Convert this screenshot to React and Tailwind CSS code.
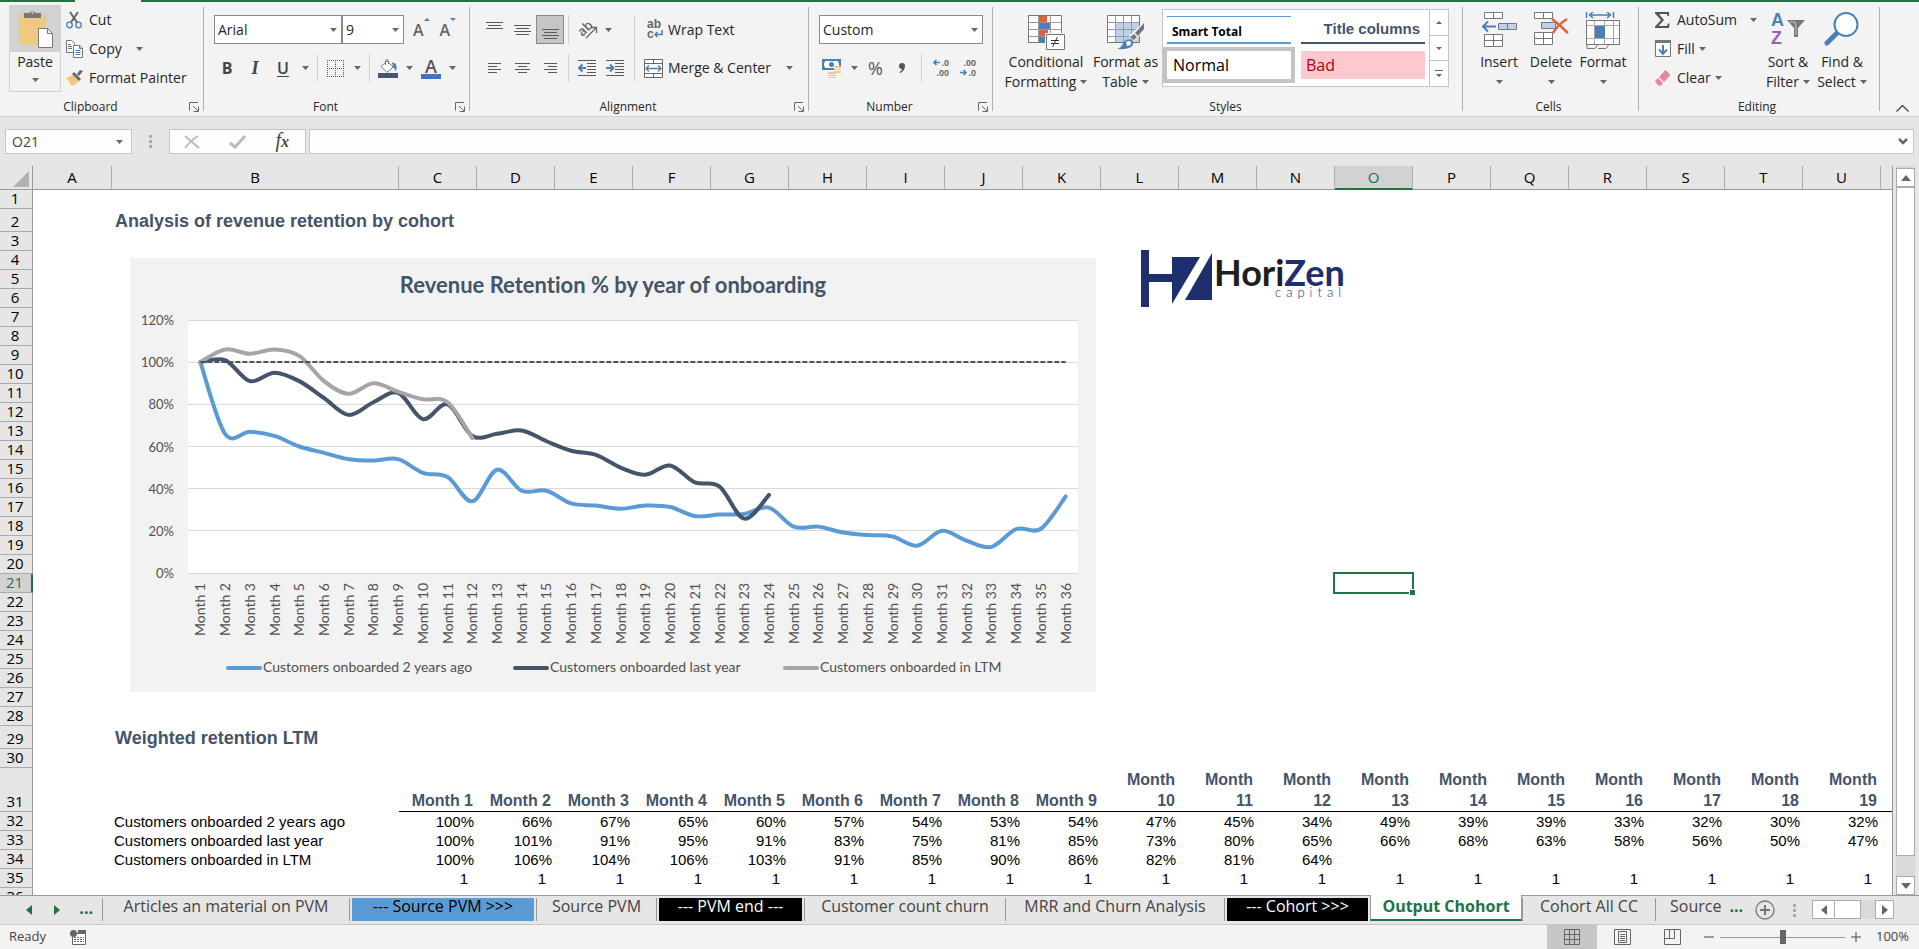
import React, { useState } from 'react';

const MONTHS = Array.from({ length: 36 }, (_, i) => `Month ${i + 1}`);

const series = [
  {
    name: 'Customers onboarded 2 years ago',
    color: '#5b9bd5',
    legendX: 96,
    values: [
      100, 66, 67, 65, 60, 57, 54, 53.4, 54, 47.5, 45.5, 34, 49, 39, 39, 33, 32, 30.5, 32,
      31.3, 27, 27.7, 28, 31, 22, 22, 19.2, 18, 17.3, 13, 20, 15.3, 12.4, 20.8, 21, 36.3,
    ],
  },
  {
    name: 'Customers onboarded last year',
    color: '#44546a',
    legendX: 383,
    values: [
      100, 101, 91, 95, 91, 83, 75, 81, 85.5, 73, 80, 65, 66, 67.6, 62.5, 58, 56, 50, 46.6,
      51, 43, 41, 25.8, 37,
    ],
  },
  {
    name: 'Customers onboarded in LTM',
    color: '#a5a5a5',
    legendX: 653,
    values: [100, 106, 104, 106, 103, 91, 85, 90, 86, 82.4, 81, 64],
  },
];

const table = [
  {
    row: 32,
    label: 'Customers onboarded 2 years ago',
    values: [100, 66, 67, 65, 60, 57, 54, 53, 54, 47, 45, 34, 49, 39, 39, 33, 32, 30, 32],
  },
  {
    row: 33,
    label: 'Customers onboarded last year',
    values: [100, 101, 91, 95, 91, 83, 75, 81, 85, 73, 80, 65, 66, 68, 63, 58, 56, 50, 47],
  },
  {
    row: 34,
    label: 'Customers onboarded in LTM',
    values: [100, 106, 104, 106, 103, 91, 85, 90, 86, 82, 81, 64],
  },
];

const COLUMNS = 'ABCDEFGHIJKLMNOPQRSTU'.split('');
const DATA_COLUMNS = COLUMNS.slice(2);

const sheets = [
  { name: 'Articles an material on PVM', width: 'w-[242px]' },
  { name: '--- Source PVM >>>', width: 'w-[182px]', color: 'bg-[#5b9bd5] text-black' },
  { name: 'Source PVM', width: 'w-[115px]' },
  { name: '--- PVM end ---', width: 'w-[143px]', color: 'bg-black text-white' },
  { name: 'Customer count churn', width: 'w-[196px]' },
  { name: 'MRR and Churn Analysis', width: 'w-[214px]' },
  { name: '--- Cohort >>>', width: 'w-[141px]', color: 'bg-black text-white' },
  { name: 'Output Chohort', width: 'w-[150px]' },
  { name: 'Cohort All CC', width: 'w-[128px]' },
];

/* ---------- ribbon building blocks ---------- */

const Caret = () => (
  <svg className="h-1 w-[7px] shrink-0" viewBox="0 0 7 4">
    <path d="M0 0h7L3.5 4z" fill="#666" />
  </svg>
);

const Divider = () => <div className="my-[5px] w-px shrink-0 bg-[#b1b1b1]" />;

const Group = ({ title, width, launcher, children }) => (
  <section className={`flex shrink-0 flex-col ${width}`}>
    <div className="h-24">{children}</div>
    <div className="flex h-[18px] items-center pr-1 text-xs">
      <span className={`flex-1 text-center ${launcher ? 'pr-2' : ''}`}>{title}</span>
      {launcher && (
        <button aria-label={`${title} settings`}>
          <svg className="h-[10px] w-[10px]" viewBox="0 0 10 10" fill="none" stroke="#666">
            <path d="M.5 8.500V.5H9M4 4l5 5M9.500 4.500v5H4.500" />
          </svg>
        </button>
      )}
    </div>
  </section>
);

const BigButton = ({ icon, lines, width, caretBelow }) => (
  <button className={`flex flex-col items-center whitespace-nowrap text-sm leading-5 ${width}`}>
    <span className="flex h-10 items-start">{icon}</span>
    {lines.map((line, i) => (
      <span key={line} className="flex items-center gap-1">
        {line}
        {!caretBelow && i === lines.length - 1 && <Caret />}
      </span>
    ))}
    {caretBelow && (
      <span className="flex h-5 items-center">
        <Caret />
      </span>
    )}
  </button>
);

const SelectBox = ({ label, options, width }) => (
  <div className={`relative ${width}`}>
    <select
      aria-label={label}
      className="h-[29px] w-full appearance-none border border-[#8a8a8a] bg-white pl-[3px] text-sm text-[#262626]"
    >
      {options.map((o) => (
        <option key={o}>{o}</option>
      ))}
    </select>
    <span className="pointer-events-none absolute right-[5px] top-0 flex h-full items-center">
      <Caret />
    </span>
  </div>
);

const Lines = ({ rows }) => (
  <svg className="h-[18px] w-[17px]" viewBox="0 0 17 18" fill="none" stroke="#595959">
    {rows.map(([x, y, len]) => (
      <path key={y} d={`M${x} ${y}.5h${len}`} />
    ))}
  </svg>
);

const Indent = ({ flip }) => (
  <svg className="h-[18px] w-[18px]" viewBox="0 0 18 18" fill="none">
    <path d="M0 1.500h18M9 4.500h9M9 7.500h9M9 10.500h9M9 13.500h9M0 16.500h18" stroke="#595959" />
    <path
      d={flip ? 'M0 9h7M4 5.500 7.500 9 4 12.500' : 'M8 9H1M4.500 5.500 1 9l3.500 3.500'}
      stroke="#4a7fb8"
      strokeWidth="2"
    />
  </svg>
);

const Decimals = ({ decrease }) => (
  <svg
    className="h-5 w-4 overflow-visible font-['Liberation_Sans',sans-serif]"
    viewBox="0 0 16 20"
    fontSize="9"
    fontWeight="700"
    fill="#666"
  >
    <text x="16" y="8" textAnchor="end">
      {decrease ? '.00' : '.0'}
    </text>
    <text x="16" y="18" textAnchor="end">
      {decrease ? '.0' : '.00'}
    </text>
    <path
      d={decrease ? 'M0 14.500h6M3.500 12 6 14.500 3.500 17' : 'M7 4.500H1M3.500 2 1 4.500 3.500 7'}
      fill="none"
      stroke="#4a7fb8"
      strokeWidth="1.700"
    />
  </svg>
);

/* ---------- ribbon groups ---------- */

const Clipboard = () => (
  <Group title="Clipboard" width="w-[203px]" launcher>
    <div className="flex pl-[9px] pt-[3px]">
      <button className="flex h-[87px] w-[52px] flex-col items-center border border-[#d2d2d2] text-sm leading-5">
        <span className="flex h-[46px] w-full items-end justify-center bg-[#d2d2d2] pb-1">
          <svg className="h-[38px] w-9" viewBox="0 0 36 38">
            <rect x="2" y="4" width="27" height="31" rx="1" fill="#efc97f" />
            <path d="M7 8V3h5a4 3 0 0 1 7 0h5v5z" fill="#777" />
            <circle cx="15.500" cy="3" r="1" fill="#d2d2d2" />
            <path d="M21.500 18.500h9l5 5v14h-14z" fill="#fff" stroke="#777" />
            <path d="M30.500 18.500v5h5" fill="none" stroke="#777" />
          </svg>
        </span>
        <span>Paste</span>
        <span className="flex h-4 items-center">
          <Caret />
        </span>
      </button>
      <div className="flex flex-col pl-[5px] text-sm leading-[29px]">
        <button className="flex items-center gap-[7px]">
          <svg className="h-[18px] w-4" viewBox="0 0 16 18" fill="none">
            <path d="M4 1l7.500 11M12 1 4.500 12" stroke="#666" strokeWidth="2" />
            <circle cx="3.500" cy="14" r="2.800" stroke="#4a7fb8" strokeWidth="1.300" />
            <circle cx="12.500" cy="14" r="2.800" stroke="#4a7fb8" strokeWidth="1.300" />
          </svg>
          Cut
        </button>
        <button className="flex items-center gap-[6px]">
          <svg className="h-[18px] w-[17px]" viewBox="0 0 17 18" fill="#fff" stroke="#777">
            <path d="M.5.5h5l3 3v9h-8z" />
            <path d="M2 4.500h3M2 6.500h4M2 8.500h4" stroke="#4a7fb8" />
            <path d="M7.500 5.500h6l3 3v9h-9z" />
            <path d="M13.500 5.500v3h3" fill="none" />
            <path d="M9.500 10.500h5M9.500 12.500h5M9.500 14.500h5" stroke="#4a7fb8" />
          </svg>
          Copy
          <span className="pl-2">
            <Caret />
          </span>
        </button>
        <button className="flex items-center gap-[6px] whitespace-nowrap">
          <svg className="h-4 w-[17px]" viewBox="0 0 17 16">
            <path d="M0 8l7-3 6 6-6 5c-2-1-3-2-4-4l-1-2z" fill="#efc97f" />
            <path d="M6 4l2-2 7 7-2 2z" fill="#666" />
            <path d="M11 4l3-4 3 1-4 5z" fill="#666" />
          </svg>
          Format Painter
        </button>
      </div>
    </div>
  </Group>
);

const FontGroup = () => (
  <Group title="Font" width="w-[265px]" launcher>
    <div className="flex flex-col gap-[10px] pl-[10px] pt-[13px]">
      <div className="flex items-center">
        <SelectBox label="Font" options={['Arial', 'Calibri']} width="w-[128px]" />
        <SelectBox label="Font size" options={['9', '10', '11']} width="w-[62px]" />
        <button aria-label="Increase font size" className="ml-[9px] flex items-start text-base font-semibold text-[#666]">
          A
          <svg className="h-[3px] w-[6px]" viewBox="0 0 6 3">
            <path d="M0 3h6L3 0z" fill="#4a7fb8" />
          </svg>
        </button>
        <button aria-label="Decrease font size" className="ml-[10px] flex items-start text-base font-semibold text-[#666]">
          A
          <svg className="h-[3px] w-[6px]" viewBox="0 0 6 3">
            <path d="M0 0h6L3 3z" fill="#4a7fb8" />
          </svg>
        </button>
      </div>
      <div className="flex h-7 items-center text-base text-[#444]">
        <button className="w-[26px] font-bold">B</button>
        <button className="w-[30px] font-['Liberation_Serif',serif] text-lg font-bold italic">I</button>
        <button className="w-[26px] font-semibold underline underline-offset-2">U</button>
        <button aria-label="Underline style" className="flex w-[18px] justify-center">
          <Caret />
        </button>
        <div className="ml-[3px] h-7 w-px bg-[#d2d2d2]" />
        <button aria-label="Borders" className="flex items-center gap-[10px] pl-[9px]">
          <svg className="h-[17px] w-[17px]" viewBox="0 0 17 17" fill="none" stroke="#555" strokeDasharray="1 1">
            <path d="M0 .5h17M0 8.500h17M0 16.500h17M.5 0v17M8.500 0v17M16.500 0v17" />
          </svg>
          <Caret />
        </button>
        <div className="ml-2 h-7 w-px bg-[#d2d2d2]" />
        <button aria-label="Fill color" className="flex items-center gap-2 pl-2">
          <svg className="h-5 w-5" viewBox="0 0 20 20">
            <path d="M3 8.500 9 3l6 6-6 5.500z" fill="#fff" stroke="#777" />
            <path d="M7.500 7V2.500a1.700 1.700 0 0 1 3 0V6" fill="none" stroke="#777" />
            <path d="M14 4.500c4 0 5.500 3 4 9-1-1.500-1.500-3.500-3-4.500z" fill="#4a7fb8" />
            <path d="M0 15h20v5H0z" fill="#44546a" />
          </svg>
          <Caret />
        </button>
        <button aria-label="Font color" className="flex items-center gap-2 pl-2">
          <span className="flex w-5 flex-col items-center border-b-[5px] border-[#4472c4] text-lg leading-4 font-semibold text-[#555]">
            A
          </span>
          <Caret />
        </button>
      </div>
    </div>
  </Group>
);

const Alignment = () => (
  <Group title="Alignment" width="w-[338px]" launcher>
    <div className="flex pl-[10px] pt-[13px]">
      <div className="flex flex-col gap-[10px]">
        <div className="flex h-[29px] items-center">
          <button aria-label="Top align" className="flex w-7 justify-center">
            <Lines rows={[[0, 1, 17], [2, 4, 13], [0, 7, 17]]} />
          </button>
          <button aria-label="Middle align" className="flex w-7 justify-center">
            <Lines rows={[[0, 4, 17], [2, 7, 13], [0, 10, 17], [2, 13, 13]]} />
          </button>
          <button aria-label="Bottom align" className="flex h-[29px] w-7 items-center justify-center border border-[#8a8a8a] bg-[#c5c5c5]">
            <Lines rows={[[0, 8, 17], [2, 11, 13], [0, 14, 17], [2, 17, 13]]} />
          </button>
        </div>
        <div className="flex h-7 items-center">
          <button aria-label="Align left" className="flex w-7 justify-center">
            <Lines rows={[[2, 4, 13], [2, 7, 9], [2, 10, 13], [2, 13, 9]]} />
          </button>
          <button aria-label="Center" className="flex w-7 justify-center">
            <Lines rows={[[1, 4, 15], [4, 7, 9], [1, 10, 15], [4, 13, 9]]} />
          </button>
          <button aria-label="Align right" className="flex w-7 justify-center">
            <Lines rows={[[2, 4, 13], [6, 7, 9], [2, 10, 13], [6, 13, 9]]} />
          </button>
        </div>
      </div>
      <div className="flex flex-col gap-[10px] pl-1">
        <div className="flex h-[29px] items-center border-l border-[#d2d2d2] pl-[9px]">
          <button aria-label="Orientation" className="flex items-center gap-[7px]">
            <svg className="h-5 w-5 overflow-visible" viewBox="0 0 20 20">
              <text x="0" y="14" fontSize="13" fontWeight="600" fill="#666" transform="rotate(-45 6 10)">
                ab
              </text>
              <path d="M8 18 18 8M13 7.500h5.500V13" fill="none" stroke="#666" strokeWidth="1.300" />
            </svg>
            <Caret />
          </button>
        </div>
        <div className="flex h-7 items-center gap-[10px] border-l border-[#d2d2d2] pl-[9px]">
          <button aria-label="Decrease indent">
            <Indent />
          </button>
          <button aria-label="Increase indent">
            <Indent flip />
          </button>
        </div>
      </div>
      <div className="ml-[10px] flex flex-col gap-[10px] border-l border-[#d2d2d2] pl-[9px] text-sm">
        <button className="flex h-[29px] items-center gap-[5px] pl-[3px]">
          <svg
            className="h-5 w-4 overflow-visible font-['Liberation_Sans',sans-serif]"
            viewBox="0 0 16 20"
            fontSize="12"
            fontWeight="700"
            fill="#666"
          >
            <text x="0" y="8">ab</text>
            <text x="0" y="18">c</text>
            <path d="M15 10v4.500H8M10.500 12 8 14.500l2.500 2.500" fill="none" stroke="#4a7fb8" strokeWidth="1.500" />
          </svg>
          Wrap Text
        </button>
        <button className="flex h-7 items-center gap-[5px] whitespace-nowrap">
          <svg className="h-[19px] w-[19px]" viewBox="0 0 19 19" fill="#fff" stroke="#666">
            <path d="M.5.5h18v18H.5zM.5 4.500h18M.5 14.500h18M9.500.5v4M9.500 14.500v4" />
            <path d="M2 9.500h15M5 6.500l-3 3 3 3M14 6.500l3 3-3 3" fill="none" stroke="#4a7fb8" strokeWidth="1.400" />
          </svg>
          Merge &amp; Center
          <span className="pl-[10px]">
            <Caret />
          </span>
        </button>
      </div>
    </div>
  </Group>
);

const NumberGroup = () => (
  <Group title="Number" width="w-[183px]" launcher>
    <div className="flex flex-col gap-[10px] pl-[10px] pt-[13px]">
      <SelectBox label="Number format" options={['Custom', 'General']} width="w-[164px]" />
      <div className="flex h-7 items-center">
        <button aria-label="Accounting format" className="flex items-center gap-[9px] pl-[3px]">
          <svg className="h-5 w-5" viewBox="0 0 20 20">
            <path d="M0 1h19v11H0z" fill="#4a7fb8" />
            <path d="M3 3h13v1.500h1v4h-1V10H3V8.500H2v-4h1z" fill="#fff" />
            <circle cx="9.500" cy="6.500" r="2.500" fill="#4a7fb8" />
            <path d="M12 8h7v7h-7zM6 14h8v6H6z" fill="#efc97f" />
            <path d="M12 10.500h7M12 12.500h7M6 16.500h8M6 18.500h8" stroke="#fff" strokeWidth=".8" />
          </svg>
          <Caret />
        </button>
        <button className="ml-[10px] text-lg text-[#555]">%</button>
        <button aria-label="Comma style" className="ml-4">
          <svg className="h-[10px] w-[6px]" viewBox="0 0 6 10">
            <path d="M3 0a3 3 0 0 1 3 3c0 3-2 6-5 7l-.5-1C2.500 8 3 7 3 6a3 3 0 0 1 0-6z" fill="#555" />
          </svg>
        </button>
        <div className="ml-4 h-7 w-px bg-[#d2d2d2]" />
        <button aria-label="Increase decimal" className="ml-[11px]">
          <Decimals />
        </button>
        <button aria-label="Decrease decimal" className="ml-[11px]">
          <Decimals decrease />
        </button>
      </div>
    </div>
  </Group>
);

const Styles = () => (
  <Group title="Styles" width="w-[469px]">
    <div className="flex pl-[10px] pt-[7px]">
      <div className="flex pt-[3px]">
        <BigButton
          width="w-[86px]"
          lines={['Conditional', 'Formatting']}
          icon={
            <svg className="mt-[3px] h-[35px] w-[37px]" viewBox="0 0 37 35">
              <path d="M.5.5h33v27H.5z" fill="#fff" />
              <path d="M11 1h8v6h-8zM11 15h9v6h-9z" fill="#e0623d" />
              <path d="M11 8h11v6H11zM11 22h6v5h-6z" fill="#4a7fb8" />
              <path d="M.5 7.500h33M.5 14.500h33M.5 21.500h33M10.500.5v27M22.500.5v27" stroke="#999" />
              <path d="M.5.5h33v27H.5z" fill="none" stroke="#777" />
              <path d="M17 18h20v17H17z" fill="#f3f3f3" />
              <path d="M18.500 19.500h18v15h-18z" fill="#fff" stroke="#777" />
              <path d="M23 25.500h8M23 28.500h8M29.500 22l-5 10" stroke="#333" fill="none" />
            </svg>
          }
        />
        <BigButton
          width="w-[73px]"
          lines={['Format as', 'Table']}
          icon={
            <svg className="mt-[3px] h-[35px] w-[37px]" viewBox="0 0 37 35">
              <path d="M.5.5h32v27H.5z" fill="#fff" />
              <path d="M8 7h25v21H8z" fill="#bdd1e8" />
              <path d="M.5 7.500h32M.5 14.500h32M.5 21.500h32M8.500.5v27M16.500.5v27M24.500.5v27" stroke="#999" />
              <path d="M.5.5h32v27H.5z" fill="none" stroke="#777" />
              <path d="M38 6v9L28 26l-6-5z" fill="#f3f3f3" />
              <path d="M37 8v6l-6 7-3-3zM27 19l3 3-3 3-4-3z" fill="#777" />
              <path d="M10 34c4-1 5-4 7-7 3-4 8-3 9 0 1 4-3 8-16 7z" fill="#4a7fb8" />
              <path d="M19 27c2-2 5-1 5 1s-2 3-4 3z" fill="#fff" />
            </svg>
          }
        />
      </div>
      <div className="flex h-[78px] w-[287px] border border-[#c6c6c6] bg-white">
        <div className="grid flex-1 grid-cols-2 gap-x-[2px] text-base leading-5">
          <button className="mx-1 mt-[6px] h-7 border-t border-b-2 border-[#5b9bd5] pl-[5px] pt-1 text-left text-xs leading-5 font-bold text-black">
            Smart Total
          </button>
          <button className="mx-1 mt-[6px] h-7 border-b-2 border-[#44546a] pr-[5px] text-right font-['Liberation_Sans',sans-serif] text-[15px] font-bold text-[#44546a]">
            Title columns
          </button>
          <button className="h-9 border-4 border-[#c3c3c3] bg-white pl-[6px] text-left text-black">
            Normal
          </button>
          <button className="mx-1 mt-1 h-7 bg-[#ffc7ce] pl-[5px] text-left text-[#b00010]">Bad</button>
        </div>
        <div className="flex w-[19px] flex-col border-l border-[#c6c6c6]">
          <button aria-label="Previous styles" className="flex flex-1 items-center justify-center border-b border-[#c6c6c6]">
            <svg className="h-[3px] w-[6px]" viewBox="0 0 6 3">
              <path d="M0 3h6L3 0z" fill="#666" />
            </svg>
          </button>
          <button aria-label="Next styles" className="flex flex-1 items-center justify-center border-b border-[#c6c6c6]">
            <svg className="h-[3px] w-[6px]" viewBox="0 0 6 3">
              <path d="M0 0h6L3 3z" fill="#666" />
            </svg>
          </button>
          <button aria-label="More styles" className="flex flex-1 items-center justify-center">
            <svg className="h-[7px] w-2" viewBox="0 0 8 7">
              <path d="M0 0h8v1H0zM1 4h6L4 7z" fill="#666" />
            </svg>
          </button>
        </div>
      </div>
    </div>
  </Group>
);

const Cells = () => (
  <Group title="Cells" width="w-[175px]">
    <div className="flex pl-[9px] pt-[10px]">
      <BigButton
        width="w-[54px]"
        caretBelow
        lines={['Insert']}
        icon={
          <svg className="h-9 w-9" viewBox="0 0 36 36" fill="#fff" stroke="#777">
            <path d="M3.500.5h18v6h-18zM12.500.5v6M3.500 22.500h18v12h-18zM12.500 22.500v12M3.500 28.500h18" />
            <path d="M17.500 11.500h18v6h-18zM26.500 11.500v6" fill="#bdd1e8" />
            <path d="M15 14.500H2M7 9.500l-5 5 5 5" fill="none" stroke="#4a7fb8" strokeWidth="2" />
          </svg>
        }
      />
      <BigButton
        width="w-[50px]"
        caretBelow
        lines={['Delete']}
        icon={
          <svg className="h-9 w-9" viewBox="0 0 36 36" fill="#fff" stroke="#777">
            <path d="M1.500.5h18v6h-18zM10.500.5v6M1.500 20.500h18v12h-18zM10.500 20.500v12M1.500 26.500h18" />
            <path d="M8.500 10.500h14v6h-14z" fill="#bdd1e8" />
            <path d="M19 7c4 3 11 9 16 14M34 7c-5 3-11 9-14 14" fill="none" stroke="#e0623d" strokeWidth="2.500" />
          </svg>
        }
      />
      <BigButton
        width="w-[54px]"
        caretBelow
        lines={['Format']}
        icon={
          <svg className="h-[38px] w-9" viewBox="0 0 36 38" fill="none" stroke="#777">
            <path d="M1.500 8.500h33v24h-33z" fill="#fff" />
            <path d="M1.500 13.500h33M1.500 26.500h33M9.500 8.500v24M19.500 8.500v24M28.500 8.500v24" stroke="#aaa" />
            <path d="M1.500 8.500h33v24h-33zM2 32.500v4h8l3-4M13 36.500h8l3-4" />
            <path d="M10 14h10v12H10z" fill="#4a7fb8" stroke="none" />
            <path d="M1.500 0v6M28.500 0v6M4 3h22M8 0 4.500 3 8 6M22 0l3.500 3L22 6" stroke="#4a7fb8" strokeWidth="1.500" />
          </svg>
        }
      />
    </div>
  </Group>
);

const Editing = () => (
  <Group title="Editing" width="w-[240px]">
    <div className="flex">
      <div className="flex w-[124px] flex-col pl-4 pt-[3px] text-sm leading-[29px]">
        <button className="flex items-center gap-[7px]">
          <svg className="h-4 w-[15px]" viewBox="0 0 15 16">
            <path d="M0 0h14v4h-1.500l-.5-2H4l5 6-5.500 6H12l1-2.500h1.500L14 16H0v-1.500L6 8 0 1.500z" fill="#555" />
          </svg>
          AutoSum
          <span className="pl-[6px]">
            <Caret />
          </span>
        </button>
        <button className="flex items-center gap-1">
          <svg className="mr-[2px] h-[17px] w-4" viewBox="0 0 16 17">
            <path d="M.5.5h15v16H.5z" fill="#fff" stroke="#777" />
            <path d="M0 0h16v3H0z" fill="#777" />
            <path d="M8 5v9M4 9.500l4 4.500 4-4.500" fill="none" stroke="#4a7fb8" strokeWidth="2" />
          </svg>
          Fill
          <Caret />
        </button>
        <button className="flex items-center gap-1">
          <svg className="mr-[2px] h-4 w-4" viewBox="0 0 16 16">
            <path d="M10.500 0l5 5-6.500 7-5-5z" fill="#e8879a" />
            <path d="M3 8l5 5-2.500 3C3 16 1 13.500 0 11z" fill="#e8879a" />
          </svg>
          Clear
          <Caret />
        </button>
      </div>
      <div className="flex pt-[10px]">
        <BigButton
          width="w-[50px]"
          lines={['Sort &', 'Filter']}
          icon={
            <svg
              className="h-9 w-9 overflow-visible font-['Liberation_Sans',sans-serif]"
              viewBox="0 0 36 36"
              fontSize="18"
              fontWeight="700"
            >
              <text x="1" y="14" fill="#4a7fb8">A</text>
              <text x="1" y="32" fill="#9c5fb8">Z</text>
              <path d="M17 8h18l-7 8v9h-4v-9z" fill="#777" />
              <path d="M20 10h5l1 5v8" fill="none" stroke="#ccc" />
            </svg>
          }
        />
        <BigButton
          width="w-[58px]"
          lines={['Find &', 'Select']}
          icon={
            <svg className="h-9 w-9" viewBox="0 0 36 36" fill="none" stroke="#4a7fb8">
              <path d="M12.500 21.500 3 31" strokeWidth="5" strokeLinecap="round" />
              <circle cx="22" cy="12.500" r="11.500" fill="#fff" strokeWidth="2" />
            </svg>
          }
        />
      </div>
    </div>
  </Group>
);

const Ribbon = () => (
  <header className="shrink-0 bg-[#f3f3f3]">
    <div className="flex h-[2px] bg-[#217346] pl-[75px]">
      <div className="w-[66px] bg-[#f3f3f3]" />
    </div>
    <div className="flex h-[115px] overflow-hidden border-b border-[#d2d2d2]">
      <Clipboard />
      <Divider />
      <FontGroup />
      <Divider />
      <Alignment />
      <Divider />
      <NumberGroup />
      <Divider />
      <Styles />
      <Divider />
      <Cells />
      <Divider />
      <Editing />
      <Divider />
      <div className="flex flex-1 items-end justify-end pb-1 pr-[10px]">
        <button aria-label="Collapse ribbon">
          <svg className="h-[7px] w-[13px]" viewBox="0 0 13 7" fill="none" stroke="#444" strokeWidth="1.300">
            <path d="M.5 6.500l6-6 6 6" />
          </svg>
        </button>
      </div>
    </div>
  </header>
);

const FormulaBar = () => (
  <div className="flex shrink-0 px-[5px] pb-3 pt-3">
    <div className="relative w-[127px]">
      <input
        aria-label="Name box"
        className="h-[25px] w-full border border-[#c6c6c6] bg-[#fdfdfd] pl-[6px] text-sm text-[#444]"
        defaultValue="O21"
      />
      <span className="pointer-events-none absolute right-[9px] top-0 flex h-full items-center">
        <Caret />
      </span>
    </div>
    <svg className="ml-[17px] mt-[6px] h-[13px] w-[3px]" viewBox="0 0 3 13" fill="#aaa">
      <path d="M0 0h3v3H0zM0 5h3v3H0zM0 10h3v3H0z" />
    </svg>
    <div className="ml-[17px] flex h-[25px] w-[137px] items-center justify-between border border-[#c6c6c6] bg-[#fdfdfd] px-[14px]">
      <button aria-label="Cancel">
        <svg className="h-[14px] w-4" viewBox="0 0 16 14" fill="none" stroke="#bbb" strokeWidth="2">
          <path d="M1 1c5 4 9 8 14 12M14 1C9 4 5 8 1 13" />
        </svg>
      </button>
      <button aria-label="Enter">
        <svg className="h-[14px] w-[17px]" viewBox="0 0 17 14" fill="none" stroke="#bbb" strokeWidth="3">
          <path d="M1 8l5 4L16 1" />
        </svg>
      </button>
      <button aria-label="Insert function" className="pr-[2px] font-['Liberation_Serif',serif] text-xl leading-5 italic text-[#444]">
        f<span className="text-base font-bold">x</span>
      </button>
    </div>
    <div className="ml-[3px] flex h-[25px] flex-1 items-center border border-[#c6c6c6] bg-[#fdfdfd] pr-[5px]">
      <input aria-label="Formula bar" className="h-full min-w-0 flex-1 px-2 text-sm" />
      <button aria-label="Expand formula bar">
        <svg className="h-[7px] w-[10px]" viewBox="0 0 10 7" fill="none" stroke="#666" strokeWidth="2.500">
          <path d="M1 1l4 4 4-4" />
        </svg>
      </button>
    </div>
  </div>
);

/* ---------- chart ---------- */

const PLOT = { left: 58, right: 948, top: 62, bottom: 315 };
const STEP = (PLOT.right - PLOT.left) / MONTHS.length;
const xAt = (i) => PLOT.left + STEP * (i + 0.5);
const yAt = (v) => PLOT.bottom - ((PLOT.bottom - PLOT.top) * v) / 120;

// Catmull-Rom spline through the points, written as cubic beziers
const smooth = (values) => {
  const p = values.map((v, i) => [xAt(i), yAt(v)]);
  let d = `M${p[0][0]} ${p[0][1]}`;
  for (let i = 0; i < p.length - 1; i++) {
    const a = p[i - 1] || p[i];
    const b = p[i];
    const c = p[i + 1];
    const e = p[i + 2] || c;
    d += ` C${b[0] + (c[0] - a[0]) / 6} ${b[1] + (c[1] - a[1]) / 6} ${c[0] - (e[0] - b[0]) / 6} ${c[1] - (e[1] - b[1]) / 6} ${c[0]} ${c[1]}`;
  }
  return d;
};

const RetentionChart = () => (
  <svg
    className="absolute left-[130px] top-[92px] h-[434px] w-[966px] bg-[#f2f2f2] font-[Lato,sans-serif] [font-variant-ligatures:none]"
    viewBox="0 0 966 434"
    fill="#505050"
    fontSize="14"
  >
    <text x="483" y="35" textAnchor="middle" fontSize="22" fontWeight="700" fill="#44546a">
      Revenue Retention % by year of onboarding
    </text>
    <rect x={PLOT.left} y={PLOT.top} width={PLOT.right - PLOT.left} height={PLOT.bottom - PLOT.top} fill="#fff" />
    {[0, 20, 40, 60, 80, 100, 120].map((v) => (
      <g key={v}>
        <path d={`M${PLOT.left} ${Math.floor(yAt(v)) + 0.5}H${PLOT.right}`} stroke="#d9d9d9" />
        <text x="44" y={yAt(v) + 5} textAnchor="end" fontSize="13">
          {v}%
        </text>
      </g>
    ))}
    {series.map((s) => (
      <path key={s.name} d={smooth(s.values)} fill="none" stroke={s.color} strokeWidth="4" strokeLinejoin="round" strokeLinecap="round" />
    ))}
    <path d={`M${xAt(0)} ${Math.floor(yAt(100))}H${xAt(35)}`} stroke="#44546a" strokeWidth="2" strokeDasharray="5 2" />
    {MONTHS.map((m, i) => (
      <text key={m} textAnchor="end" transform={`translate(${xAt(i) + 5} 325) rotate(-90)`}>
        {m}
      </text>
    ))}
    {series.map((s) => (
      <g key={s.name}>
        <path d={`M${s.legendX + 2} 410h32`} stroke={s.color} strokeWidth="4" strokeLinecap="round" />
        <text x={s.legendX + 37} y="414">
          {s.name}
        </text>
      </g>
    ))}
  </svg>
);

const Logo = () => (
  <svg
    className="absolute left-[1140px] top-[82px] h-[62px] w-[212px] font-[Lato,sans-serif]"
    viewBox="0 0 212 62"
    fill="#1e2f6d"
  >
    <path d="M1 2h8v24h23v8H9v25H1z" />
    <path d="M32 9h28L32 56zM72 5v47H45z" />
    <text x="74" y="38" fontSize="36" fontWeight="700" fill="#1e1e1e">
      Hori<tspan fill="#1e2f6d">Zen</tspan>
    </text>
    <text className="tracking-[5px]" x="135" y="49" fontSize="13" fontWeight="300">
      capital
    </text>
  </svg>
);

/* ---------- sheet ---------- */

const rowHeight = (n) => {
  if (n === 2 || n === 29) return 'h-[23px]';
  if (n === 31) return 'h-11';
  return 'h-[19px]';
};

const RowHeader = ({ n }) => (
  <th
    scope="row"
    className={`border-b border-b-[#ababab] p-0 pr-[2px] pb-px align-bottom font-['Open_Sans',sans-serif] text-[15px] leading-[17px] font-normal ${
      n === 21
        ? 'border-r-2 border-r-[#217346] bg-[#d2d2d2] text-[#217346]'
        : 'border-r border-r-[#999] bg-[#e6e6e6] text-black'
    }`}
  >
    {n}
  </th>
);

const SheetRow = ({ n }) => {
  const data = table.find((t) => t.row === n);
  const titles = { 2: 'Analysis of revenue retention by cohort', 29: 'Weighted retention LTM' };

  if (titles[n]) {
    return (
      <tr className={rowHeight(n)}>
        <RowHeader n={n} />
        <td />
        <td colSpan={21} className="p-0 pl-[3px] text-lg leading-[22px] font-bold text-[#44546a]">
          {titles[n]}
        </td>
      </tr>
    );
  }

  return (
    <tr className={rowHeight(n)}>
      <RowHeader n={n} />
      <td className="p-0" />
      <td className="p-0 pl-[2px]">{data && data.label}</td>
      {DATA_COLUMNS.map((c, i) => {
        if (n === 31) {
          return (
            <td key={c} className="border-b border-black p-0 pl-3 pr-1 text-right align-bottom text-base leading-[21px] font-bold text-[#44546a]">
              {MONTHS[i]}
            </td>
          );
        }
        if (n === 21 && c === 'O') {
          return (
            <td key={c} className="relative p-0">
              <div className="absolute -left-[2px] -top-[2px] -right-px -bottom-px border-2 border-[#217346]" />
              <div className="absolute -right-[3px] -bottom-[3px] h-[7px] w-[7px] border border-white bg-[#217346]" />
            </td>
          );
        }
        return (
          <td key={c} className={`p-0 text-right ${n === 35 ? 'pr-[9px]' : 'pr-[3px]'}`}>
            {data && data.values[i] !== undefined && `${data.values[i]}%`}
            {n === 35 && 1}
          </td>
        );
      })}
      <td className={n === 31 ? 'border-b border-black p-0' : 'p-0'} />
    </tr>
  );
};

const Sheet = () => (
  <div className="relative min-w-0 flex-1 overflow-hidden border-r border-[#999]">
    <table className="w-full table-fixed border-separate border-spacing-0 bg-white font-['Liberation_Sans',sans-serif] text-[15px] leading-[18px] text-black">
      <colgroup>
        <col className="w-[33px]" />
        <col className="w-[79px]" />
        <col className="w-[287px]" />
        {DATA_COLUMNS.map((c) => (
          <col key={c} className="w-[78px]" />
        ))}
        <col />
      </colgroup>
      <thead className="font-['Open_Sans',sans-serif]">
        <tr className="h-6">
          <th className="border-b border-r border-[#999] bg-[#e6e6e6] p-0 pb-[2px] pr-[3px] align-bottom">
            <svg className="ml-auto h-4 w-4" viewBox="0 0 16 16">
              <path d="M16 0v16H0z" fill="#b1b1b1" />
            </svg>
          </th>
          {COLUMNS.map((c) => (
            <th
              key={c}
              scope="col"
              className={`border-r border-r-[#ababab] p-0 text-[15px] leading-[21px] font-normal ${
                c === 'O'
                  ? 'border-b-2 border-b-[#217346] bg-[#d2d2d2] text-[#217346]'
                  : 'border-b border-b-[#999] bg-[#e6e6e6]'
              }`}
            >
              {c}
            </th>
          ))}
          <th className="border-b border-[#999] bg-[#e6e6e6] p-0" />
        </tr>
      </thead>
      <tbody>
        {Array.from({ length: 36 }, (_, i) => (
          <SheetRow key={i} n={i + 1} />
        ))}
      </tbody>
    </table>
    <RetentionChart />
    <Logo />
  </div>
);

const arrows = {
  up: 'M0 8h10L5 2z',
  down: 'M0 2h10L5 8z',
  left: 'M8 0v10L2 5z',
  right: 'M2 0v10l6-5z',
};

const Arrow = ({ dir, color = '#666' }) => (
  <svg className="h-[10px] w-[10px]" viewBox="0 0 10 10">
    <path d={arrows[dir]} fill={color} />
  </svg>
);

const VerticalScroll = () => (
  <div className="ml-[3px] mr-1 flex w-[19px] shrink-0 flex-col bg-[#d9d9d9] pt-[2px]">
    <button aria-label="Scroll up" className="flex h-[19px] items-center justify-center border border-[#ababab] bg-white">
      <Arrow dir="up" />
    </button>
    <div className="mb-5 flex-1 border border-[#ababab] bg-white" />
    <button aria-label="Scroll down" className="flex h-[19px] items-center justify-center border border-[#ababab] bg-white">
      <Arrow dir="down" />
    </button>
  </div>
);

const SheetTabs = () => {
  const [active, setActive] = useState('Output Chohort');

  return (
    <nav className="flex h-[30px] shrink-0 border-b border-[#c6c6c6] text-base text-[#444]">
      <div className="flex w-[102px] items-center justify-between border-t border-[#999] pl-[24px] pr-[9px]">
        <button aria-label="Previous sheet">
          <Arrow dir="left" color="#217346" />
        </button>
        <button aria-label="Next sheet">
          <Arrow dir="right" color="#217346" />
        </button>
        <button className="pb-1 font-bold text-[#217346]">...</button>
      </div>
      {sheets.map(({ name, width, color = '' }) => (
        <div
          key={name}
          className={
            name === active
              ? 'mb-[3px] border-x border-b-2 border-x-[#999] border-b-[#217346] bg-white'
              : 'border-t border-[#999] pt-[2px]'
          }
        >
          <div className={name === active ? 'pt-[3px]' : 'h-[23px] border-l border-[#999] px-[2px]'}>
            <button
              onClick={() => setActive(name)}
              className={`block h-[23px] whitespace-nowrap text-center leading-4 ${width} ${color} ${
                name === active ? 'font-bold text-[#217346]' : ''
              }`}
            >
              <span className="block h-full">{name}</span>
            </button>
          </div>
        </div>
      ))}
      <div className="flex flex-1 border-t border-[#999] pt-[2px]">
        <div className="flex h-[23px] border-l border-[#999] pl-[14px] leading-4">
          <button className="flex items-start">Source</button>
          <button className="ml-2 flex items-start font-bold text-[#217346]">...</button>
        </div>
        <button aria-label="New sheet" className="ml-3 mt-[2px] h-5 w-5">
          <svg viewBox="0 0 20 20" fill="none" stroke="#777">
            <circle cx="10" cy="10" r="9" strokeWidth="1.300" />
            <path d="M10 5v10M5 10h10" strokeWidth="2" />
          </svg>
        </button>
        <svg className="ml-[18px] mt-[6px] h-[13px] w-[3px]" viewBox="0 0 3 13" fill="#aaa">
          <path d="M0 0h3v3H0zM0 5h3v3H0zM0 10h3v3H0z" />
        </svg>
        <div className="ml-auto mr-[25px] mt-[2px] flex h-[19px] w-[82px] bg-[#d9d9d9]">
          <button aria-label="Scroll left" className="flex w-[23px] items-center justify-center border border-[#ababab] bg-white">
            <Arrow dir="left" />
          </button>
          <div className="mr-[14px] flex-1 border border-l-0 border-[#ababab] bg-white" />
          <button aria-label="Scroll right" className="flex w-[19px] items-center justify-center border border-[#ababab] bg-white">
            <Arrow dir="right" />
          </button>
        </div>
      </div>
    </nav>
  );
};

const StatusBar = () => (
  <footer className="flex h-6 shrink-0 items-center bg-[#f3f3f3] pl-[9px] text-[13px] text-[#444]">
    <span>Ready</span>
    <button aria-label="Record macro" className="ml-6">
      <svg className="h-[15px] w-4" viewBox="0 0 16 15">
        <path d="M2.500 3.500h13v11h-13z" fill="#fff" stroke="#666" />
        <path d="M8 0h8v4H8z" fill="#666" />
        <circle cx="3.500" cy="3.500" r="3.500" fill="#666" />
        <path d="M4 7.500h10M4 9.500h10M4 11.500h10" stroke="#666" strokeDasharray="2 1" />
      </svg>
    </button>
    <div className="ml-auto flex h-full items-center">
      <button aria-label="Normal view" className="flex h-full w-[50px] items-center justify-center bg-[#c6c6c6]">
        <svg className="h-4 w-4" viewBox="0 0 16 16" fill="none" stroke="#666">
          <path d="M.5.5h15v15H.5zM.5 5.500h15M.5 10.500h15M5.500.5v15M10.500.5v15" />
        </svg>
      </button>
      <button aria-label="Page layout view" className="flex w-[50px] items-center justify-center">
        <svg className="h-4 w-[17px]" viewBox="0 0 17 16" fill="none" stroke="#666">
          <path d="M.5.5h16v15H.5zM4.500 2.500h8v11h-8zM6 5.500h5M6 7.500h5M6 9.500h5M6 11.500h5" />
        </svg>
      </button>
      <button aria-label="Page break preview" className="flex w-[50px] items-center justify-center">
        <svg className="h-4 w-[17px]" viewBox="0 0 17 16" fill="none" stroke="#666">
          <path d="M.5.5h16v15H.5zM.5 9.500h10V.5M5.500.5v9" />
        </svg>
      </button>
      <button aria-label="Zoom out" className="ml-[7px] flex h-4 w-[10px] items-center">
        <svg viewBox="0 0 10 10" stroke="#444">
          <path d="M0 5h10" />
        </svg>
      </button>
      <input
        type="range"
        aria-label="Zoom"
        min="0"
        max="200"
        defaultValue="100"
        className="mx-[6px] h-[14px] w-[125px] appearance-none bg-[linear-gradient(#999,#999)] bg-[length:100%_1px] bg-center bg-no-repeat [&::-webkit-slider-thumb]:h-[14px] [&::-webkit-slider-thumb]:w-[6px] [&::-webkit-slider-thumb]:appearance-none [&::-webkit-slider-thumb]:bg-[#666]"
      />
      <button aria-label="Zoom in" className="flex h-4 w-[10px] items-center">
        <svg viewBox="0 0 10 10" stroke="#444">
          <path d="M0 5h10M5 0v10" />
        </svg>
      </button>
      <span className="w-[58px] pr-[10px] text-right">100%</span>
    </div>
  </footer>
);

export default function App() {
  return (
    <div className="flex h-screen flex-col overflow-hidden bg-[#e6e6e6] font-['Open_Sans',sans-serif] text-[#262626]">
      <Ribbon />
      <FormulaBar />
      <main className="flex min-h-0 flex-1">
        <Sheet />
        <VerticalScroll />
      </main>
      <SheetTabs />
      <StatusBar />
    </div>
  );
}
